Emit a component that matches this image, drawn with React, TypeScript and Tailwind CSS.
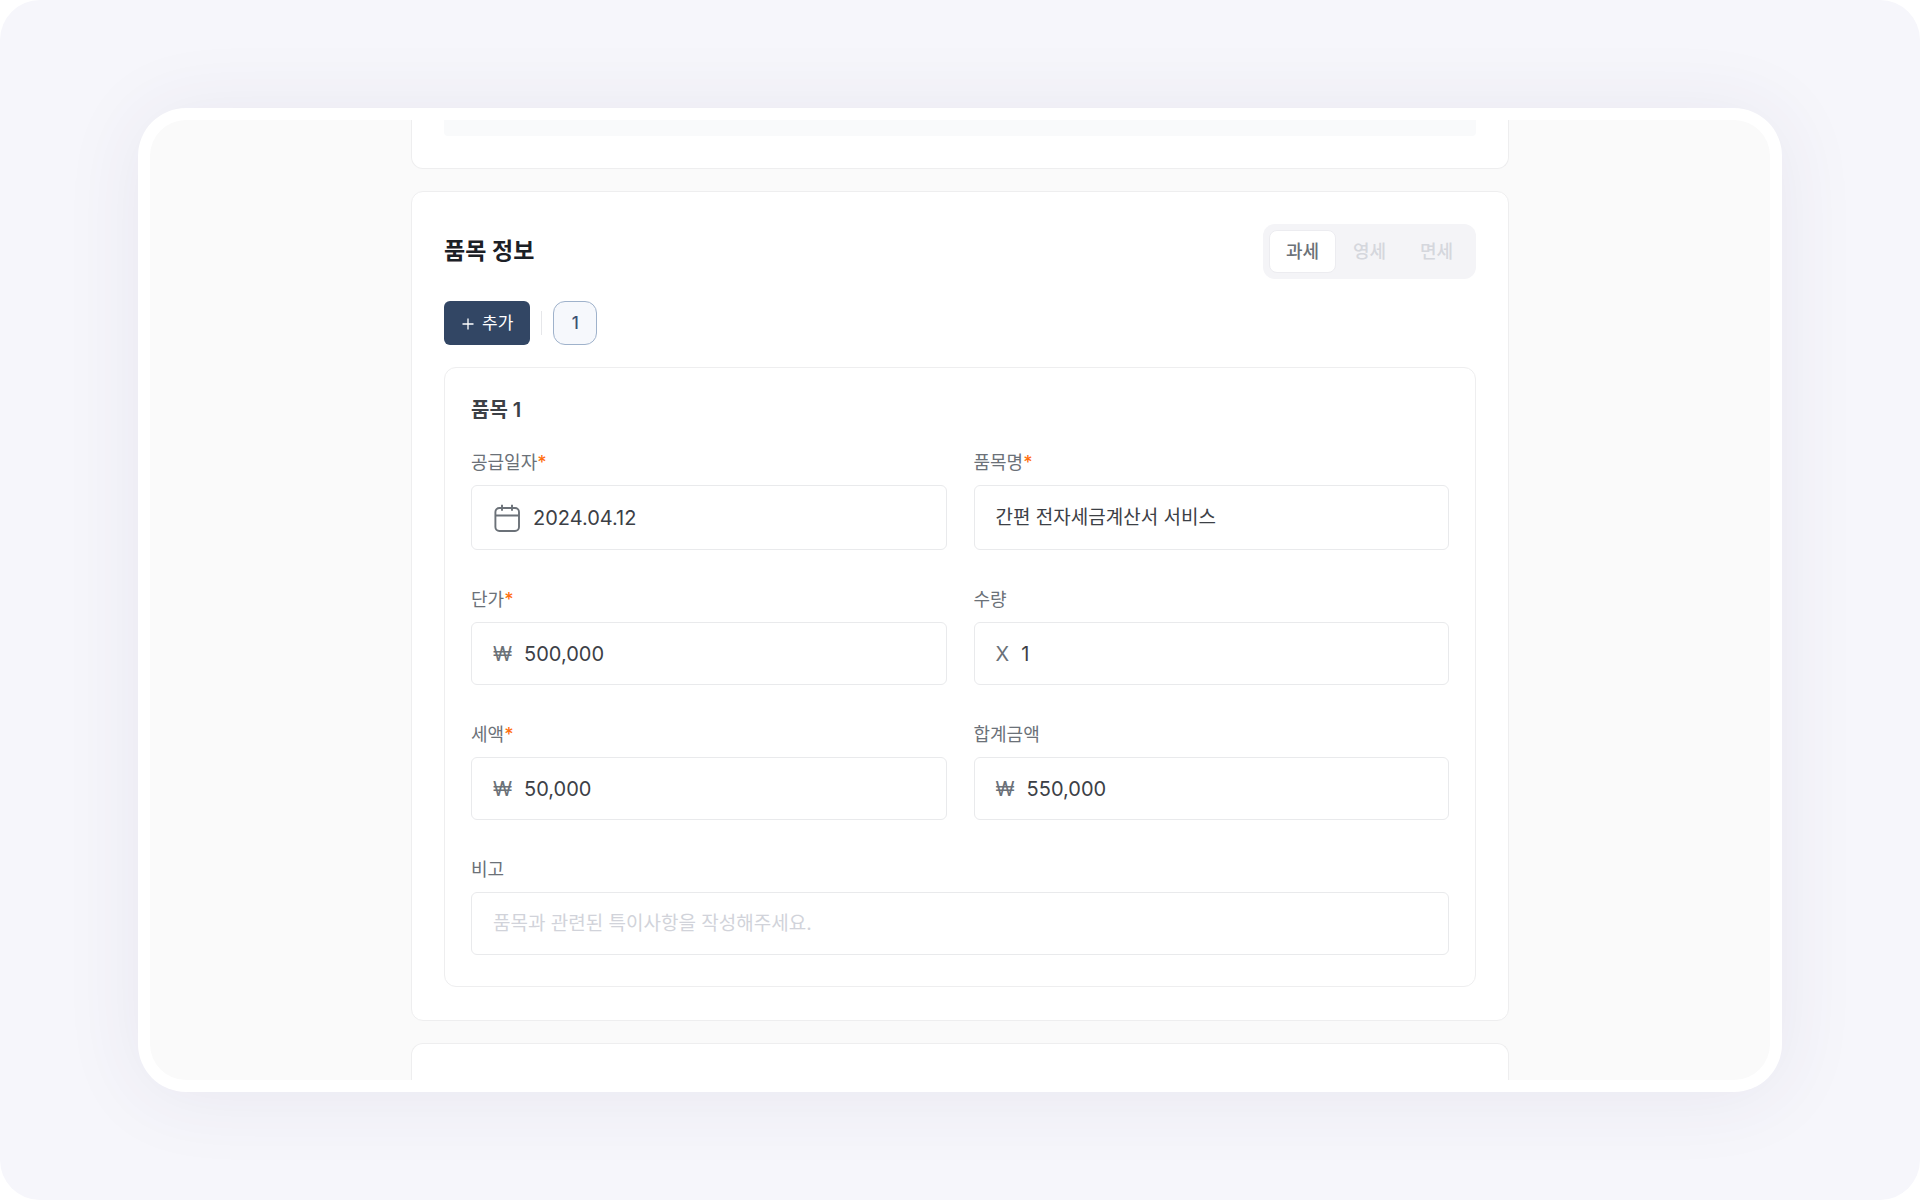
import React, { useState } from 'react';

interface FieldProps {
  id: string;
  label: string;
  required?: boolean;
  prefix?: React.ReactNode;
  value?: string;
  placeholder?: string;
  className?: string;
  boxClassName?: string;
}

const CalendarIcon = () => (
  <svg
    className="h-7 w-7"
    viewBox="0 0 28 28"
    fill="none"
    stroke="#6b7178"
    strokeWidth="1.9"
    aria-hidden="true"
  >
    <rect x="2.4" y="4" width="23.6" height="23" rx="4" />
    <path d="M2.4 11.5H26M9 .7v6M19 .7v6" />
  </svg>
);

const PlusIcon = () => (
  <svg className="h-3 w-3" viewBox="0 0 12 12" fill="none" stroke="currentColor" strokeWidth="1.3" aria-hidden="true">
    <path d="M6 .5v11M.5 6h11" />
  </svg>
);

const Field = ({ id, label, required, prefix, value, placeholder, className = '', boxClassName = 'h-[63px]' }: FieldProps) => {
  return (
    <div className={className}>
      <label htmlFor={id} className="mb-2 block text-[18px] leading-[28px] text-[#6b7178]">
        {label}
        {required && <span className="font-medium text-[#ff6f0f]">*</span>}
      </label>
      <div className={`flex items-center gap-3 rounded-md border border-[#e9eaec] bg-white px-[21px] ${boxClassName}`}>
        {prefix && <span className="shrink-0 text-[20px] text-[#6b7178]">{prefix}</span>}
        <input
          id={id}
          type="text"
          defaultValue={value}
          placeholder={placeholder}
          className={`min-w-0 flex-1 bg-transparent text-[#3c4046] outline-none placeholder:text-[#d1d3da] ${
            prefix ? 'text-[20px]' : 'pt-0.5 text-[19px]'
          }`}
        />
      </div>
    </div>
  );
};

const TAX_TYPES = ['과세', '영세', '면세'];

const TaxTypeToggle = () => {
  const [selected, setSelected] = useState('과세');

  return (
    <div className="flex rounded-xl bg-[#f4f4f7] p-[6px]">
      {TAX_TYPES.map((type) => (
        <button
          key={type}
          type="button"
          aria-pressed={selected === type}
          onClick={() => setSelected(type)}
          className={`h-[43px] w-[67px] rounded-lg border text-[18px] font-medium ${
            selected === type
              ? 'border-[#ececf0] bg-white text-[#6b7178]'
              : 'border-transparent text-[#d5d7dd]'
          }`}
        >
          {type}
        </button>
      ))}
    </div>
  );
};

const ItemCard = () => {
  return (
    <div className="mt-[22px] rounded-xl border border-[#eeeeef] px-[26px] pt-[27px] pb-[31px]">
      <h3 className="text-[20px] leading-[30px] font-semibold text-[#3c4046]">품목 1</h3>

      <div className="mt-6 grid grid-cols-2 gap-x-[27px] gap-y-9">
        <Field
          id="supply-date"
          label="공급일자"
          required
          prefix={<CalendarIcon />}
          value="2024.04.12"
          boxClassName="h-[65px]"
        />
        <Field id="item-name" label="품목명" required value="간편 전자세금계산서 서비스" boxClassName="h-[65px]" />
        <Field id="unit-price" label="단가" required prefix="₩" value="500,000" />
        <Field id="quantity" label="수량" prefix="X" value="1" />
        <Field id="tax" label="세액" required prefix="₩" value="50,000" />
        <Field id="total" label="합계금액" prefix="₩" value="550,000" />
        <Field id="note" label="비고" placeholder="품목과 관련된 특이사항을 작성해주세요." className="col-span-2" />
      </div>
    </div>
  );
};

export default function App() {
  return (
    <div className="flex min-h-screen rounded-[40px] bg-[#f6f6fb] px-[138px] py-[108px] font-['Inter','Noto_Sans_CJK_KR',sans-serif]">
      <main className="flex flex-1 rounded-[48px] bg-white p-3 shadow-[0_4px_80px_rgba(60,45,100,0.08)]">
        <div className="flex flex-1 flex-col overflow-hidden rounded-[36px] bg-[#fafafa]">
          <div className="mx-auto flex w-full max-w-[1098px] flex-1 flex-col gap-[22px]">
            {/* Previous section, scrolled out at the top */}
            <section className="rounded-b-xl border border-t-0 border-[#eeeeef] bg-white px-8 pb-8">
              <div className="h-4 rounded-b bg-[#f9fafb]"></div>
            </section>

            <section className="rounded-xl border border-[#eeeeef] bg-white px-8 pt-8 pb-[33px]">
              <div className="flex items-center justify-between">
                <h2 className="pb-0.5 text-[23px] leading-[34px] font-semibold text-[#1c2026]">품목 정보</h2>
                <TaxTypeToggle />
              </div>

              <div className="mt-[22px] flex items-center gap-[11px]">
                <button
                  type="button"
                  className="flex h-11 items-center gap-2 rounded-md bg-[#324664] pt-0.5 pr-[17px] pl-[18px] text-[17px] text-white"
                >
                  <PlusIcon />
                  추가
                </button>
                <span className="h-6 w-px bg-[#e6e7ea]"></span>
                <button
                  type="button"
                  className="h-11 w-11 rounded-xl border border-[#9fb2cb] bg-[#f6f8fc] pt-0.5 text-[17px] font-medium text-[#3d5173]"
                >
                  1
                </button>
              </div>

              <ItemCard />
            </section>

            {/* Next section, cut off at the bottom */}
            <section className="min-h-8 flex-1 rounded-t-xl border border-b-0 border-[#eeeeef] bg-white"></section>
          </div>
        </div>
      </main>
    </div>
  );
}
